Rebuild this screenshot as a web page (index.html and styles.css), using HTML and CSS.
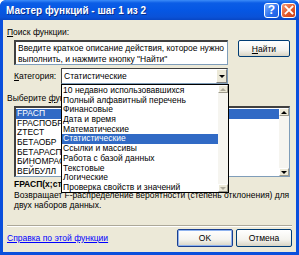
FILE: index.html
```html
<!DOCTYPE html>
<html lang="ru">

<head>
  <meta charset="UTF-8" />
  <title>Мастер функций - шаг 1 из 2</title>
  <link rel="stylesheet" href="styles.css">
</head>

<body>
  <div class="window">
    <!-- Title bar -->
    <div class="titlebar">
      <span class="title">Мастер функций - шаг 1 из 2</span>
      <div class="title-btn help">?</div>
      <div class="title-btn close">
        <svg width="10" height="10" viewBox="0 0 10 10">
          <path d="M1.5 1.5 L8.5 8.5 M8.5 1.5 L1.5 8.5" stroke="#fff" stroke-width="1.8" stroke-linecap="square" />
        </svg>
      </div>
    </div>

    <div class="content">
      <div class="label"><u>П</u>оиск функции:</div>

      <div class="search-row">
        <div class="search-box">Введите краткое описание действия, которое нужно выполнить, и нажмите кнопку "Найти"</div>
        <button class="btn find"><u>Н</u>айти</button>
      </div>

      <div class="cat-row">
        <span class="cat-label"><u>К</u>атегория:</span>
        <div class="combo">
          <span class="combo-text">Статистические</span>
          <span class="combo-btn"><i class="arrow-down"></i></span>

          <!-- Open dropdown -->
          <div class="dropdown">
            <ul class="dd-items">
              <li>10 недавно использовавшихся</li>
              <li>Полный алфавитный перечень</li>
              <li>Финансовые</li>
              <li>Дата и время</li>
              <li>Математические</li>
              <li class="selected">Статистические</li>
              <li>Ссылки и массивы</li>
              <li>Работа с базой данных</li>
              <li>Текстовые</li>
              <li>Логические</li>
              <li>Проверка свойств и значений</li>
            </ul>
            <div class="scrollbar disabled">
              <span class="sb-btn"><i class="arrow-up"></i></span>
              <span class="sb-track"></span>
              <span class="sb-btn"><i class="arrow-down"></i></span>
            </div>
          </div>
        </div>
      </div>

      <div class="label func-label">Выберите <u>ф</u>ункцию:</div>

      <div class="func-list">
        <ul class="fl-items">
          <li class="selected">FРАСП</li>
          <li>FРАСПОБР</li>
          <li>ZТЕСТ</li>
          <li>БЕТАОБР</li>
          <li>БЕТАРАСП</li>
          <li>БИНОМРАСП</li>
          <li>ВЕЙБУЛЛ</li>
        </ul>
        <div class="scrollbar">
          <span class="sb-btn"><i class="arrow-up"></i></span>
          <span class="sb-track"></span>
          <span class="sb-btn"><i class="arrow-down"></i></span>
        </div>
      </div>

      <div class="signature">FРАСП(x;степени_свободы1;степени_свободы2)</div>
      <div class="desc">Возвращает F-распределение вероятности (степень отклонения) для двух наборов данных.</div>

      <div class="separator"></div>

      <div class="footer">
        <a href="#" class="help-link">Справка по этой функции</a>
        <button class="btn ok">OK</button>
        <button class="btn">Отмена</button>
      </div>
    </div>
  </div>
</body>

</html>
```

FILE: styles.css
```css
body {
  margin: 0;
  background: #fff;
  font-family: 'Liberation Sans', Arial, sans-serif;
  font-size: 8.5px;
  color: #000;
}

.window {
  width: 299px;
  height: 255px;
  box-sizing: border-box;
  padding: 0 3px 3px;
  background: #0a4fdc;
  border-radius: 6px 6px 0 0;
  display: flex;
  flex-direction: column;
  overflow: hidden;
}

.titlebar {
  height: 20px;
  margin: 0 -3px;
  padding: 0 3px 0 6px;
  display: flex;
  align-items: center;
  gap: 2px;
  background: linear-gradient(to bottom, #3c8cf8 0, #0b5de6 3px, #0557e4 10px, #0a52d8 17px, #0846c4 20px);
  border-radius: 6px 6px 0 0;
}

.title {
  flex: 1;
  color: #fff;
  font-weight: bold;
  font-size: 10px;
  text-shadow: 1px 1px 0 #0a2f8c;
  white-space: nowrap;
}

.title-btn {
  width: 15px;
  height: 15px;
  box-sizing: border-box;
  border: 1px solid #fff;
  border-radius: 3px;
  display: flex;
  align-items: center;
  justify-content: center;
  color: #fff;
  font-weight: bold;
  font-size: 12px;
}

.title-btn.help {
  background: linear-gradient(135deg, #7fb0fb, #2a6ff0 60%, #1e5fe0);
}

.title-btn.close {
  background: linear-gradient(135deg, #f59a7a, #e35a2b 55%, #c8401a);
}

.content {
  flex: 1;
  background: #ece9d8;
  padding: 0 4px;
  display: flex;
  flex-direction: column;
}

.label {
  margin-top: 7px;
  line-height: 10px;
}

.search-row {
  margin-top: 3px;
  margin-left: 7px;
  display: flex;
  align-items: flex-start;
  gap: 10px;
}

.search-box {
  width: 214px;
  height: 25px;
  box-sizing: border-box;
  background: #fff;
  border: 1px solid #7f9db9;
  border-top: 2px solid #404040;
  border-left: 2px solid #404040;
  padding: 1px 2px;
  line-height: 10.5px;
}

.btn {
  font-family: inherit;
  font-size: 8.5px;
  color: #000;
  height: 17px;
  width: 52px;
  padding: 0;
  border: 1px solid #003c74;
  border-radius: 2px;
  background: linear-gradient(to bottom, #ffffff, #f4f3ee 60%, #d8d4c4);
}

.cat-row {
  margin-top: 3px;
  margin-left: 7px;
  display: flex;
  align-items: center;
  gap: 5px;
}

.combo {
  position: relative;
  width: 167px;
  height: 16px;
  box-sizing: border-box;
  background: #fff;
  border: 1px solid #7f9db9;
  border-top-color: #404040;
  border-left-color: #404040;
  display: flex;
  align-items: center;
}

.combo-text {
  flex: 1;
  padding-left: 2px;
}

.combo-btn {
  width: 11px;
  height: 14px;
  box-sizing: border-box;
  border: 1px solid #fff;
  border-right-color: #808080;
  border-bottom-color: #808080;
  background: #ece9d8;
  display: flex;
  align-items: center;
  justify-content: center;
}

.arrow-down,
.arrow-up {
  width: 0;
  height: 0;
  border-left: 3px solid transparent;
  border-right: 3px solid transparent;
}

.arrow-down {
  border-top: 3px solid #000;
}

.arrow-up {
  border-bottom: 3px solid #000;
}

.dropdown {
  position: absolute;
  top: 15px;
  left: -1px;
  width: 168px;
  height: 109px;
  box-sizing: border-box;
  background: #fff;
  border: 1px solid #000;
  display: flex;
  z-index: 10;
}

ul {
  margin: 0;
  padding: 0;
  list-style: none;
}

.dd-items {
  flex: 1;
  padding-top: 1px;
}

.dd-items li,
.fl-items li {
  height: 9.7px;
  line-height: 9.7px;
  padding-left: 1px;
  white-space: nowrap;
}

li.selected {
  background: #316ac5;
  color: #fff;
}

.scrollbar {
  width: 10px;
  display: flex;
  flex-direction: column;
  background: #f6f5f0;
}

.sb-btn {
  height: 8px;
  box-sizing: border-box;
  border: 1px solid #fff;
  border-right-color: #9d9a8c;
  border-bottom-color: #9d9a8c;
  background: #ece9d8;
  display: flex;
  align-items: center;
  justify-content: center;
}

.sb-track {
  flex: 1;
}

.scrollbar.disabled .arrow-down {
  border-top-color: #aca899;
}

.scrollbar.disabled .arrow-up {
  border-bottom-color: #aca899;
}

.func-label {
  margin-top: 9px;
}

.func-list {
  margin-top: 3px;
  margin-left: 7px;
  width: 276px;
  height: 71px;
  box-sizing: border-box;
  background: #fff;
  border: 1px solid #7f9db9;
  border-top: 2px solid #404040;
  border-left: 2px solid #404040;
  display: flex;
}

.fl-items {
  flex: 1;
  padding-top: 1px;
}

.signature {
  margin-top: 2px;
  margin-left: 7px;
  font-weight: bold;
  line-height: 10px;
  white-space: nowrap;
}

.desc {
  margin-top: 2px;
  margin-left: 7px;
  line-height: 9.5px;
  width: 276px;
}

.separator {
  margin-top: 15px;
  height: 0;
  border-top: 1px solid #aca899;
  border-bottom: 1px solid #fff;
}

.footer {
  margin-top: 2px;
  display: flex;
  align-items: center;
  gap: 3px;
}

.help-link {
  flex: 1;
  color: #0000ff;
}

.btn.ok {
  width: 55px;
  height: 18px;
  border-color: #1b3f8f;
  box-shadow: inset 0 0 0 1px #8fb3ef;
}

.footer .btn {
  width: 56px;
  height: 18px;
}
```
